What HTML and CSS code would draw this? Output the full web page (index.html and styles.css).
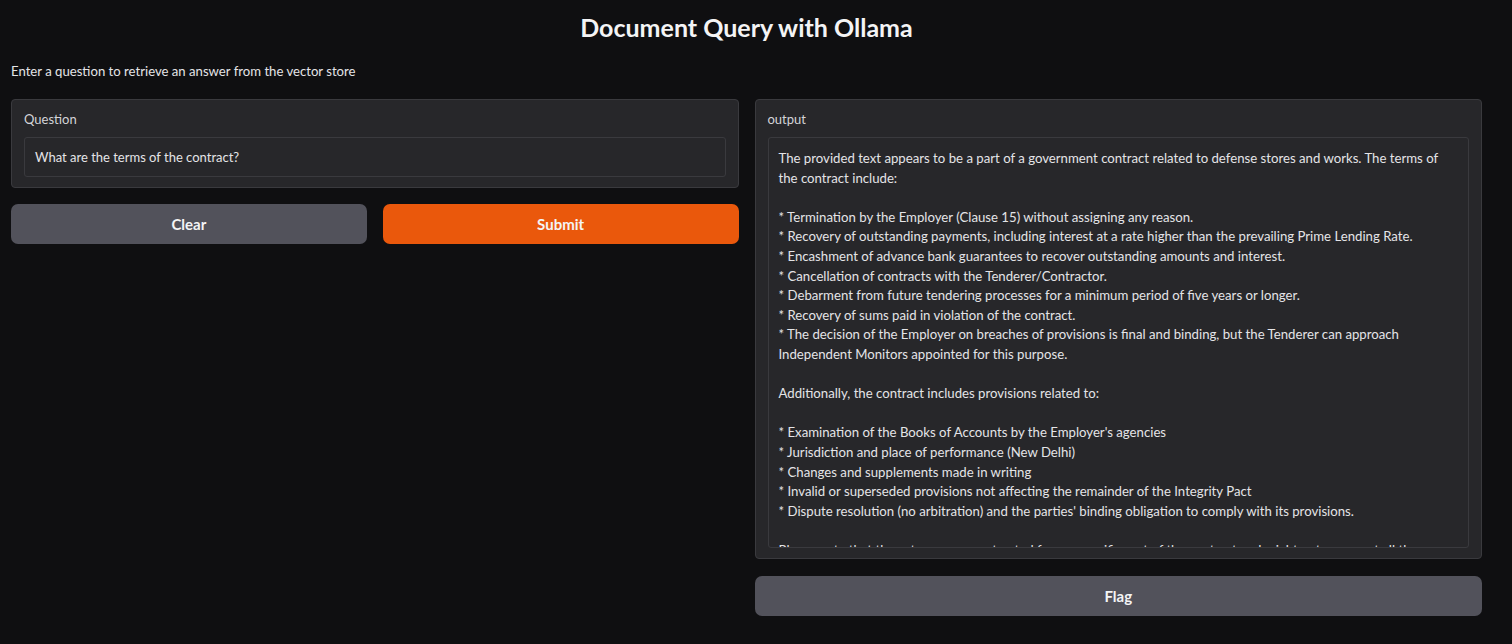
FILE: index.html
```html
<!DOCTYPE html>
<html lang="en">
<head>
<meta charset="utf-8">
<title>Document Query with Ollama</title>
<link rel="stylesheet" href="styles.css">
</head>
<body>
<div class="app">
  <h1 class="title">Document Query with Ollama</h1>
  <p class="desc">Enter a question to retrieve an answer from the vector store</p>
  <div class="row">
    <div class="col">
      <div class="block">
        <div class="label">Question</div>
        <div class="input">What are the terms of the contract?</div>
      </div>
      <div class="btn-row">
        <button class="btn secondary">Clear</button>
        <button class="btn primary">Submit</button>
      </div>
    </div>
    <div class="col">
      <div class="block">
        <div class="label">output</div>
        <div class="textarea"><div class="out">The provided text appears to be a part of a government contract related to defense stores and works. The terms of
the contract include:

* Termination by the Employer (Clause 15) without assigning any reason.
* Recovery of outstanding payments, including interest at a rate higher than the prevailing Prime Lending Rate.
* Encashment of advance bank guarantees to recover outstanding amounts and interest.
* Cancellation of contracts with the Tenderer/Contractor.
* Debarment from future tendering processes for a minimum period of five years or longer.
* Recovery of sums paid in violation of the contract.
* The decision of the Employer on breaches of provisions is final and binding, but the Tenderer can approach
Independent Monitors appointed for this purpose.

Additionally, the contract includes provisions related to:

* Examination of the Books of Accounts by the Employer's agencies
* Jurisdiction and place of performance (New Delhi)
* Changes and supplements made in writing
* Invalid or superseded provisions not affecting the remainder of the Integrity Pact
* Dispute resolution (no arbitration) and the parties' binding obligation to comply with its provisions.

Please note that these terms were extracted from a specific part of the contract and might not represent all the
terms of the agreement.</div></div>
      </div>
      <button class="btn secondary flag">Flag</button>
    </div>
  </div>
</div>
</body>
</html>
```

FILE: styles.css
```css
* { box-sizing: border-box; }
html, body { margin: 0; padding: 0; }
body {
  background: #0f0f11;
  color: #f4f4f5;
  font-family: Lato, "Noto Sans", sans-serif;
  width: 1512px;
  height: 644px;
  overflow: hidden;
}
.app {
  width: 1471px;
  margin-left: 11px;
}
.title {
  margin: 0;
  padding-top: 10px;
  height: 44px;
  line-height: 34px;
  font-size: 25px;
  font-weight: 700;
  text-align: center;
  color: #f4f4f5;
}
.desc {
  margin: 0;
  padding-top: 18px;
  height: 55px;
  line-height: 19px;
  font-size: 13.15px;
  color: #e4e4e7;
}
.row {
  display: flex;
  gap: 16px;
  align-items: flex-start;
}
.col {
  flex: 1 1 0;
  display: flex;
  flex-direction: column;
  gap: 16px;
}
.block {
  background: #27272a;
  border: 1px solid #3a3a3e;
  border-radius: 4px;
  padding: 10px 12px;
}
.label {
  font-size: 13px;
  line-height: 18px;
  color: #d4d4d8;
  margin-bottom: 9px;
}
.input {
  height: 40px;
  border: 1px solid #3a3a3e;
  border-radius: 3px;
  background: #27272a;
  padding: 0 10px;
  font-size: 13px;
  line-height: 38px;
  color: #e4e4e7;
}
.textarea {
  height: 411px;
  border: 1px solid #3a3a3e;
  border-radius: 3px;
  background: #27272a;
  padding: 11px 10px 10px;
  overflow: hidden;
}
.out {
  white-space: pre;
  font-size: 13.2px;
  line-height: 19.6px;
  color: #e4e4e7;
}
.btn-row {
  display: flex;
  gap: 16px;
}
.btn {
  flex: 1 1 0;
  height: 40px;
  border: none;
  border-radius: 7px;
  font-family: inherit;
  font-size: 15px;
  font-weight: 700;
  color: #f4f4f5;
  cursor: pointer;
}
.secondary { background: #52525b; }
.primary { background: #ea580c; }
.flag { flex: none; width: 100%; margin-top: 1px; }
```
